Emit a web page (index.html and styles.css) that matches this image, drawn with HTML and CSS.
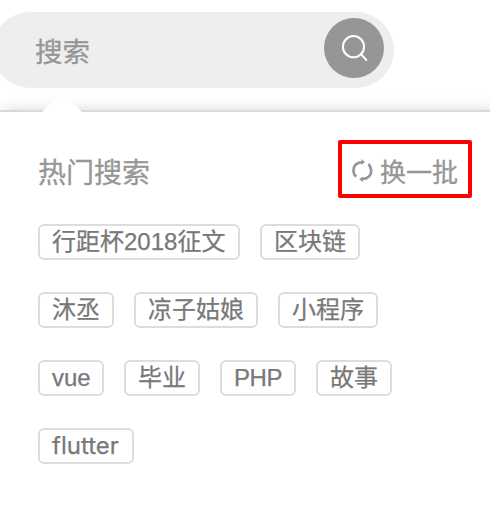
FILE: index.html
```html
<!DOCTYPE html>
<html lang="zh-CN">
<head>
<meta charset="utf-8">
<title>搜索</title>
<link rel="stylesheet" href="styles.css">
</head>
<body>
<div class="search">
  <span class="placeholder">搜索</span>
  <button class="search-button" aria-label="搜索">
    <svg width="60" height="60" viewBox="0 0 60 60" fill="none" stroke="#fff" stroke-width="2" stroke-linecap="round"><circle cx="29.5" cy="28.7" r="10.6"/><path d="M37 36.2L42.3 42"/></svg>
  </button>
</div>
<section class="panel">
  <svg class="arrow" width="40" height="20" viewBox="0 0 40 20"><path d="M0 20L18.2 1.8Q20 0 21.8 1.8L40 20Z" fill="#fff"/></svg>
  <header class="heading">
    <h1>热门搜索</h1>
    <a class="refresh">
      <svg width="24" height="24" viewBox="0 0 24 24" fill="none" stroke="#969696" stroke-width="2.7"><path d="M6.2 17.8C2.8 14.5 2.5 9.6 5.2 6.2C6.9 4.1 9.4 3.1 12.8 3.3"/><path d="M18.4 5C21.8 8.5 22.1 13.6 19.4 17C17.6 19.2 15.2 20.1 11.9 20"/><path d="M11.6 0L15 3L11.6 5.8ZM12.8 17.4L9.2 20.3L12.8 23Z" fill="#969696" stroke="none"/></svg>
      <span>换一批</span>
    </a>
  </header>
  <div class="tags">
    <div class="row"><a class="tag long">行距杯2018征文</a><a class="tag three">区块链</a></div>
    <div class="row"><a class="tag two">沐丞</a><a class="tag four">凉子姑娘</a><a class="tag three">小程序</a></div>
    <div class="row"><a class="tag vue">vue</a><a class="tag two">毕业</a><a class="tag two php">PHP</a><a class="tag two">故事</a></div>
    <div class="row"><a class="tag flutter">flutter</a></div>
  </div>
</section>
</body>
</html>
```
FILE: styles.css
```css
* { box-sizing: border-box; }
body {
  margin: 0;
  padding-top: 12px;
  height: 508px;
  overflow: hidden;
  background: #fff;
  color: #969696;
  font-family: "Liberation Sans", "Noto Sans CJK SC", sans-serif;
}
.search {
  display: flex;
  align-items: center;
  justify-content: space-between;
  width: 402px;
  height: 76px;
  margin-left: -8px;
  padding: 0 10px 0 43px;
  border-radius: 38px;
  background: #eee;
}
.placeholder { font-size: 27.5px; line-height: 40px; padding-top: 6px; -webkit-text-stroke: .3px; }
.search-button {
  display: block;
  width: 60px;
  height: 60px;
  margin-top: -4px;
  padding: 0;
  border: 0;
  border-radius: 50%;
  background: #969696;
}
.search-button svg { display: block; }
.panel {
  position: relative;
  width: 490px;
  height: 396px;
  margin-top: 24px;
  padding: 42px 18px 0 38px;
  background: #fff;
  box-shadow: 0 0 0 2px #d9d9d9, 4px 0 16px 0 rgba(0, 0, 0, .2);
}
.arrow { position: absolute; left: 42px; top: -20px; }
.heading {
  display: flex;
  align-items: center;
  justify-content: space-between;
  height: 40px;
}
h1 { margin: 0; font-size: 28px; font-weight: 400; line-height: 40px; -webkit-text-stroke: .3px; }
.refresh {
  display: flex;
  align-items: center;
  width: 134px;
  height: 58px;
  margin-top: -10px;
  padding-left: 8px;
  border: 4px solid #f00;
  border-radius: 2px;
  font-size: 26px;
  -webkit-text-stroke: .3px;
}
.refresh svg { flex: none; margin: 4px 6px 0 0; }
.refresh span { padding-top: 8px; line-height: 38px; }
.tags { display: flex; flex-direction: column; gap: 32px; margin-top: 30px; }
.row { display: flex; gap: 20px; }
.tag {
  height: 36px;
  padding-left: 12px;
  border: 2px solid #ddd;
  border-radius: 6px;
  color: #787878;
  font-size: 24px;
  line-height: 32px;
  white-space: nowrap;
  -webkit-text-stroke: .25px;
}
.long { width: 202px; }
.two { width: 76px; }
.three { width: 100px; }
.four { width: 124px; }
.vue { width: 66px; }
.php { letter-spacing: -.4px; }
.flutter {
  width: 96px;
  font-family: Inter, sans-serif;
}
```
